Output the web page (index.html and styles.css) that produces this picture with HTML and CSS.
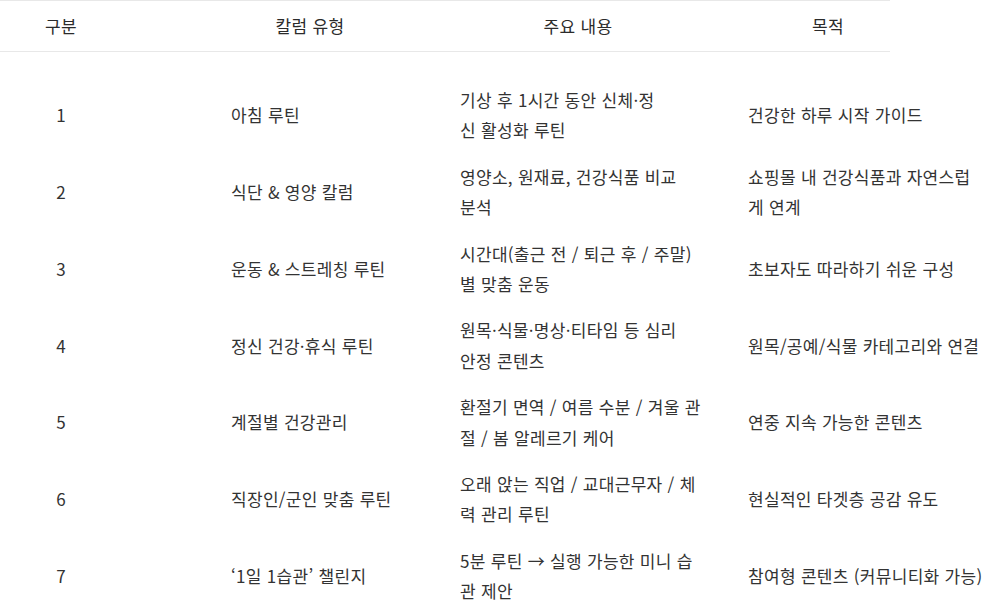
FILE: index.html
```html
<!DOCTYPE html>
<html lang="ko">
<head>
<meta charset="utf-8">
<title>칼럼 유형</title>
<link rel="stylesheet" href="styles.css">
</head>
<body>
<div class="table">
  <div class="head">
    <div class="hcell">구분</div>
    <div class="hcell">칼럼 유형</div>
    <div class="hcell">주요 내용</div>
    <div class="hcell">목적</div>
  </div>
  <div class="body">
    <div class="row">
      <div class="cell num">1</div>
      <div class="cell type">아침 루틴</div>
      <div class="cell desc">기상 후 1시간 동안 신체·정<br>신 활성화 루틴</div>
      <div class="cell goal">건강한 하루 시작 가이드</div>
    </div>
    <div class="row">
      <div class="cell num">2</div>
      <div class="cell type">식단 &amp; 영양 칼럼</div>
      <div class="cell desc">영양소, 원재료, 건강식품 비교<br>분석</div>
      <div class="cell goal">쇼핑몰 내 건강식품과 자연스럽<br>게 연계</div>
    </div>
    <div class="row">
      <div class="cell num">3</div>
      <div class="cell type">운동 &amp; 스트레칭 루틴</div>
      <div class="cell desc">시간대(출근 전 / 퇴근 후 / 주말)<br>별 맞춤 운동</div>
      <div class="cell goal">초보자도 따라하기 쉬운 구성</div>
    </div>
    <div class="row">
      <div class="cell num">4</div>
      <div class="cell type">정신 건강·휴식 루틴</div>
      <div class="cell desc">원목·식물·명상·티타임 등 심리<br>안정 콘텐츠</div>
      <div class="cell goal">원목/공예/식물 카테고리와 연결</div>
    </div>
    <div class="row">
      <div class="cell num">5</div>
      <div class="cell type">계절별 건강관리</div>
      <div class="cell desc">환절기 면역 / 여름 수분 / 겨울 관<br>절 / 봄 알레르기 케어</div>
      <div class="cell goal">연중 지속 가능한 콘텐츠</div>
    </div>
    <div class="row">
      <div class="cell num">6</div>
      <div class="cell type">직장인/군인 맞춤 루틴</div>
      <div class="cell desc">오래 앉는 직업 / 교대근무자 / 체<br>력 관리 루틴</div>
      <div class="cell goal">현실적인 타겟층 공감 유도</div>
    </div>
    <div class="row">
      <div class="cell num">7</div>
      <div class="cell type">‘1일 1습관’ 챌린지</div>
      <div class="cell desc">5분 루틴 → 실행 가능한 미니 습<br>관 제안</div>
      <div class="cell goal">참여형 콘텐츠 (커뮤니티화 가능)</div>
    </div>
  </div>
</div>
</body>
</html>
```

FILE: styles.css
```css
html, body {
  margin: 0;
  padding: 0;
  background: #ffffff;
}

body {
  font-family: "Noto Sans CJK KR", "Noto Sans", sans-serif;
  font-size: 17px;
  letter-spacing: 0.3px;
  color: #333333;
  overflow: hidden;
}

.table {
  width: 1000px;
}

.head {
  width: 890px;
  height: 50px;
  border-top: 1px solid #e8e8e8;
  border-bottom: 1px solid #e8e8e8;
  display: grid;
  grid-template-columns: 122px 376px 160px 340px;
  align-items: center;
}

.hcell {
  text-align: center;
  color: #2b2b2b;
  line-height: 50px;
}

.body {
  margin-top: 25px;
}

.row {
  display: grid;
  grid-template-columns: 122px 338px 288px 252px;
  align-items: center;
  padding: 8px 0;
  line-height: 30.4px;
}

.cell.num {
  text-align: center;
}

.cell.type {
  padding-left: 109px;
}

.cell.desc,
.cell.goal {
  white-space: nowrap;
}
```
